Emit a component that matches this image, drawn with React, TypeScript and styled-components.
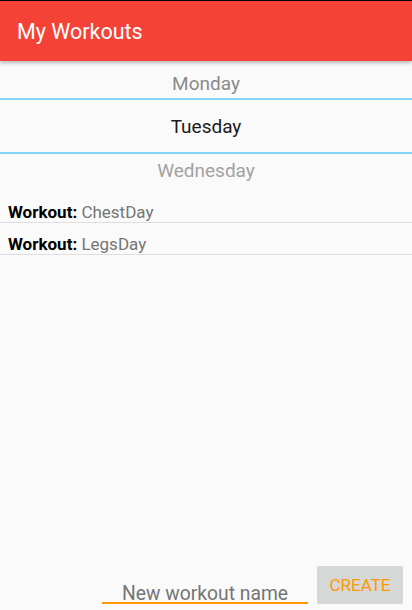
import React from "react";
import styled, { createGlobalStyle } from "styled-components";

const Global = createGlobalStyle`
  html, body { margin: 0; padding: 0; background: #fafafa; }
  body { font-family: Roboto, "Noto Sans", sans-serif; }
  * { box-sizing: border-box; }
`;

const Page = styled.div`
  height: 610px;
  display: flex;
  flex-direction: column;
  border-top: 1px solid #000;
  background: #fafafa;
  overflow: hidden;
`;

const AppBar = styled.header`
  height: 60px;
  flex: none;
  background: #f44336;
  display: flex;
  align-items: center;
  padding-left: 17px;
  box-shadow: 0 2px 4px rgba(0, 0, 0, 0.28);
  position: relative;
  z-index: 1;
`;

const Title = styled.h1`
  margin: 0;
  font-size: 21.5px;
  font-weight: 400;
  color: #fff;
`;

const Picker = styled.div`
  display: flex;
  flex-direction: column;
  flex: none;
`;

const PickerItem = styled.div<{ $h: number; $color: string; $shift?: number; $selected?: boolean }>`
  height: ${(p) => p.$h}px;
  display: flex;
  align-items: center;
  justify-content: center;
  font-size: 19px;
  color: ${(p) => p.$color};
  padding-top: ${(p) => Math.max(0, (p.$shift ?? 0) * 2)}px;
  padding-bottom: ${(p) => Math.max(0, -(p.$shift ?? 0) * 2)}px;
  border-top: ${(p) => (p.$selected ? "2px solid #81d4fa" : "none")};
  border-bottom: ${(p) => (p.$selected ? "2px solid #81d4fa" : "none")};
`;

const List = styled.div`
  flex: 1;
  display: flex;
  flex-direction: column;
`;

const Row = styled.div`
  height: 32px;
  padding: 11px 8px 0;
  line-height: 20px;
  font-size: 17px;
  border-bottom: 1px solid #dedede;
`;

const Label = styled.span`
  font-weight: 700;
  color: #000;
`;

const Value = styled.span`
  color: #757575;
`;

const Footer = styled.div`
  flex: none;
  display: flex;
  align-items: flex-end;
  justify-content: flex-end;
  padding: 0 9px 6px 0;
  gap: 9px;
`;

const Input = styled.input`
  width: 206px;
  height: 38px;
  border: none;
  border-bottom: 2px solid #ff9800;
  background: transparent;
  font-family: Roboto, sans-serif;
  font-size: 19.3px;
  text-align: center;
  padding: 18px 0 0;
  outline: none;
  &::placeholder { color: #757575; }
`;

const Button = styled.button`
  width: 86px;
  height: 38px;
  border: none;
  border-radius: 2px;
  background: #d6d7d7;
  color: #ff9800;
  font-family: Roboto, sans-serif;
  font-size: 17px;
  padding: 0;
`;

export default function App() {
  const workouts = ["ChestDay", "LegsDay"];
  return (
    <>
      <Global />
      <Page>
        <AppBar>
          <Title>My Workouts</Title>
        </AppBar>
        <Picker>
          <PickerItem $h={37} $shift={4} $color="#8a8a8a">Monday</PickerItem>
          <PickerItem $h={56} $color="#1a1a1a" $selected>Tuesday</PickerItem>
          <PickerItem $h={37} $shift={-2} $color="#a2a2a2">Wednesday</PickerItem>
        </Picker>
        <List>
          {workouts.map((w) => (
            <Row key={w}>
              <Label>Workout: </Label>
              <Value>{w}</Value>
            </Row>
          ))}
        </List>
        <Footer>
          <Input placeholder="New workout name" />
          <Button>CREATE</Button>
        </Footer>
      </Page>
    </>
  );
}
